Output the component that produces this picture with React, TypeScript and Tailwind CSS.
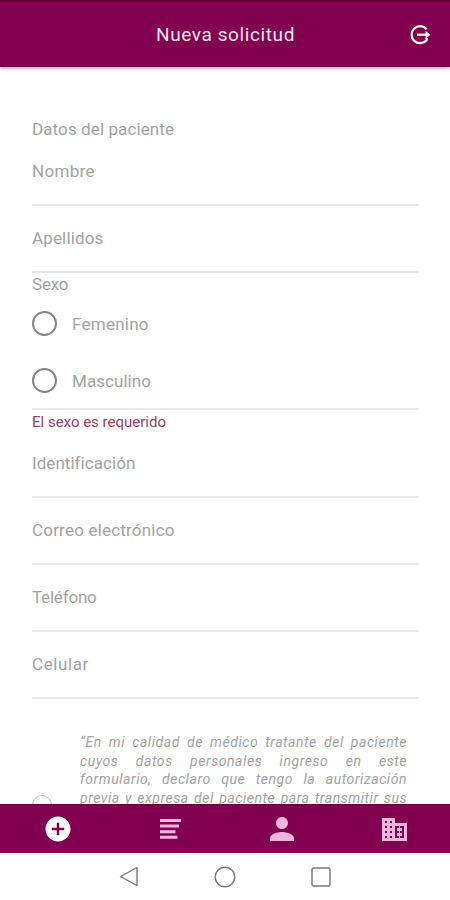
import type { ReactNode } from 'react'
import { MdAddCircle, MdPerson } from 'react-icons/md'

function Field({ label, spacing }: { label: string; spacing: string }) {
  return (
    <label className="flex h-[67px] items-start border-b-2 border-[#e8e8e8] pt-5">
      <span className={`text-[17px] leading-6 ${spacing}`}>{label}</span>
    </label>
  )
}

function RadioOption({ label, spacing }: { label: string; spacing: string }) {
  return (
    <label className="flex h-[57px] items-center gap-[15px]">
      <span className="size-[25px] rounded-full border-2 border-[#858585]" />
      <span className={`text-[17px] leading-6 ${spacing}`}>{label}</span>
    </label>
  )
}

function Tab({ children, active }: { children: ReactNode; active?: boolean }) {
  return (
    <button
      className={`flex flex-1 items-center justify-center ${active ? 'text-white' : 'text-[#f0b5db]'}`}
    >
      {children}
    </button>
  )
}

function LogoutIcon() {
  return (
    <svg width="22" height="22" viewBox="0 0 22 22" fill="none">
      <path
        d="M17.6 5.2A8.5 8.5 0 1 0 17.6 16.2V14"
        stroke="currentColor"
        strokeWidth="2.2"
      />
      <path d="M8 10.7h10" stroke="currentColor" strokeWidth="2.2" />
      <path d="M16.5 6.7l5 4-5 4z" fill="currentColor" />
    </svg>
  )
}

function ListIcon() {
  return (
    <svg width="21" height="20" viewBox="0 0 21 20" fill="currentColor">
      <path d="M0 0h21v3H0zM0 5.6h19v3H0zM0 11.2h15.5v3H0zM0 16.8h17.5v3H0z" />
    </svg>
  )
}

function BuildingIcon() {
  return (
    <svg width="25" height="23" viewBox="0 0 25 23" fill="currentColor" shapeRendering="crispEdges">
      <path
        fillRule="evenodd"
        d="M0 0h13v5h12v18H0zM3 3v2h2V3zM8 3v2h2V3zM3 8v2h2V8zM8 8v2h2V8zM3 13v2h2v-2zM8 13v2h2v-2zM3 18v2h2v-2zM8 18v2h2v-2zM13 8v12h9V8z"
      />
      <path d="M17 8h1v2h2v3h-2v2h2v3h-2v2h-1v-2h-2v-3h2v-2h-2v-3h2z" />
    </svg>
  )
}

export default function App() {
  return (
    <div className="flex h-[900px] w-[450px] flex-col overflow-hidden bg-[#fefefe] font-[Roboto,sans-serif] text-[#a3a3a3]">
      <header className="relative z-10 grid h-[67px] shrink-0 grid-cols-[1fr_auto_1fr] items-center border-t-2 border-[#5e063b] bg-[#820050] text-[#f5e5ef] shadow-[0_1px_4px_#00000066]">
        <h1 className="col-start-2 ml-px text-[19px] leading-6 tracking-[0.6px]">Nueva solicitud</h1>
        <button className="mr-[19px] justify-self-end text-white">
          <LogoutIcon />
        </button>
      </header>

      <main className="min-h-0 flex-1 overflow-hidden pr-[31px] pl-8">
        <h2 className="mt-[50px] text-[17px] leading-6 tracking-[0.1px]">Datos del paciente</h2>
        <div className="-mt-0.5">
          <Field label="Nombre" spacing="tracking-[0.3px]" />
          <Field label="Apellidos" spacing="tracking-[0.15px]" />
        </div>

        {/* Sexo */}
        <div className="h-[137px] border-b-2 border-[#e8e8e8]">
          <p className="h-[22px] text-[17px] leading-[23px] tracking-[-0.2px]">Sexo</p>
          <RadioOption label="Femenino" spacing="tracking-[0.25px]" />
          <RadioOption label="Masculino" spacing="tracking-[0.05px]" />
        </div>
        <p className="h-[21px] text-[15px] leading-6 text-[#944469]">
          El sexo es requerido
        </p>

        <Field label="Identificación" spacing="tracking-[0.05px]" />
        <Field label="Correo electrónico" spacing="tracking-[0.2px]" />
        <Field label="Teléfono" spacing="tracking-[-0.2px]" />
        <Field label="Celular" spacing="tracking-[0.6px]" />

        {/* Consentimiento */}
        <div className="mt-[34px] flex gap-7">
          <span className="mt-[62px] size-5 shrink-0 rounded-full border border-[#c0c0c0]" />
          <div className="w-[327px] text-[14px] leading-[18.5px] tracking-[0.55px] whitespace-nowrap italic">
            <p className="[text-align-last:justify]">“En mi calidad de médico tratante del paciente</p>
            <p className="[text-align-last:justify]">cuyos datos personales ingreso en este</p>
            <p className="[text-align-last:justify]">formulario, declaro que tengo la autorización</p>
            <p className="[text-align-last:justify]">previa y expresa del paciente para transmitir sus</p>
          </div>
        </div>
      </main>

      <nav className="flex h-[49px] shrink-0 border-t border-[#650038] bg-[#820050] pl-0.5">
        <Tab active>
          <MdAddCircle size={30} />
        </Tab>
        <Tab>
          <ListIcon />
        </Tab>
        <Tab>
          <MdPerson size={36} />
        </Tab>
        <Tab>
          <BuildingIcon />
        </Tab>
      </nav>

      {/* System buttons */}
      <footer className="flex h-[47px] shrink-0 items-center justify-center gap-[75px] text-[#777]">
        <svg width="20" height="21" viewBox="0 0 20 21" fill="none" stroke="currentColor" strokeWidth="1.4">
          <path d="M18 1.5v18L1.5 10.5z" strokeLinejoin="round" />
        </svg>
        <svg width="22" height="22" viewBox="0 0 22 22" fill="none" stroke="currentColor" strokeWidth="1.4">
          <circle cx="11" cy="11" r="9.8" />
        </svg>
        <svg width="20" height="20" viewBox="0 0 20 20" fill="none" stroke="currentColor" strokeWidth="1.4">
          <rect x="1" y="1" width="18" height="18" rx="1.5" />
        </svg>
      </footer>
    </div>
  )
}
